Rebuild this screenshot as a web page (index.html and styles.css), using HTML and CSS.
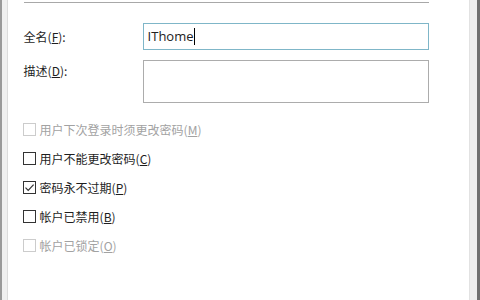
FILE: index.html
```html
<!DOCTYPE html>
<html lang="zh-CN">
<head>
    <meta charset="UTF-8" />
    <title>属性</title>
    <link rel="stylesheet" href="styles.css">
</head>
<body>

<div class="window">
    <div class="frame-left"></div>

    <div class="panel">
        <div class="divider"></div>

        <div class="field-row">
            <label class="field-label" for="fullName">全名(<u>F</u>):</label>
            <div class="text-box focused" id="fullName">IThome<span class="caret"></span></div>
        </div>

        <div class="field-row tall">
            <label class="field-label" for="desc">描述(<u>D</u>):</label>
            <div class="text-box multi" id="desc"></div>
        </div>

        <div class="options">
            <div class="option disabled">
                <span class="check"></span>
                <span>用户下次登录时须更改密码(<u>M</u>)</span>
            </div>
            <div class="option">
                <span class="check"></span>
                <span>用户不能更改密码(<u>C</u>)</span>
            </div>
            <div class="option">
                <span class="check">
                    <svg width="11" height="11" viewBox="0 0 11 11"><path d="M1.5 5.6 L4.2 8.3 L9.6 2.6" fill="none" stroke="#333" stroke-width="1.2"/></svg>
                </span>
                <span>密码永不过期(<u>P</u>)</span>
            </div>
            <div class="option">
                <span class="check"></span>
                <span>帐户已禁用(<u>B</u>)</span>
            </div>
            <div class="option disabled">
                <span class="check"></span>
                <span>帐户已锁定(<u>O</u>)</span>
            </div>
        </div>
    </div>

    <div class="frame-right"></div>
</div>

</body>
</html>
```

FILE: styles.css
```css
* {
    box-sizing: border-box;
    margin: 0;
    padding: 0;
}

body {
    font-family: "Noto Sans CJK SC", "Noto Sans", sans-serif;
    font-size: 12px;
    color: #1e1e1e;
    background: #fff;
    width: 480px;
    height: 300px;
    overflow: hidden;
}

.window {
    display: flex;
    height: 300px;
}

.frame-left {
    width: 8px;
    background: #f0f0f0;
    border-left: 2px solid #9a9a9a;
    border-right: 1px solid #dcdcdc;
}

.frame-right {
    width: 12px;
    background: #eeeeee;
    border-left: 1px solid #e2e2e2;
    border-right: 3px solid #707070;
}

.panel {
    flex: 1;
    padding: 2px 40px 0 16px;
}

.divider {
    height: 1px;
    background: #a8a8a8;
}

/* form fields */
.field-row {
    display: flex;
    align-items: flex-start;
    margin-top: 20px;
}

.field-row.tall {
    margin-top: 10px;
}

.field-label {
    width: 119px;
    line-height: 27px;
}

.field-row.tall .field-label {
    line-height: 22px;
}

.text-box {
    width: 286px;
    height: 27px;
    border: 1px solid #acacac;
    background: #fff;
    font-family: "Open Sans", "Noto Sans", sans-serif;
    font-size: 13px;
    line-height: 25px;
    padding-left: 4px;
    color: #222;
}

.text-box.focused {
    border-color: #7fb6c8;
}

.text-box.multi {
    height: 43px;
}

.caret {
    display: inline-block;
    width: 1px;
    height: 17px;
    background: #000;
    vertical-align: -4px;
}

/* checkboxes */
.options {
    margin-top: 20px;
    display: flex;
    flex-direction: column;
    gap: 16px;
}

.option {
    display: flex;
    align-items: center;
    gap: 4px;
    height: 13px;
    line-height: 13px;
}

.check {
    width: 13px;
    height: 13px;
    border: 1px solid #333;
    background: #fff;
    display: flex;
    align-items: center;
    justify-content: center;
    margin-left: -1px;
}

.option.disabled {
    color: #a2a2a2;
}

.option.disabled .check {
    border-color: #cccccc;
}
```
